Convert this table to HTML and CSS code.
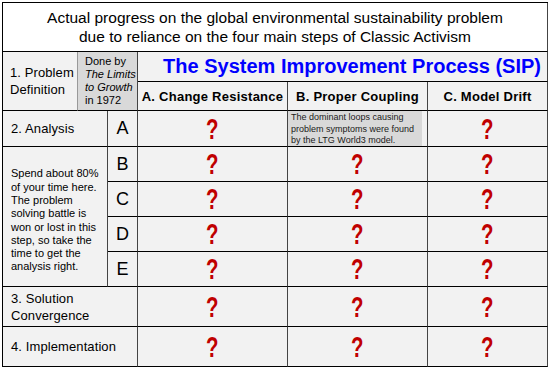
FILE: index.html
```html
<!DOCTYPE html>
<html>
<head>
<meta charset="utf-8">
<link rel="stylesheet" href="styles.css">
</head>
<body>
<div class="sheet">
  <div class="c title"><div>Actual progress on the global environmental sustainability problem<br>due to reliance on the four main steps of Classic Activism</div></div>

  <div class="c step step-def"><div>1. Problem<br>Definition</div></div>
  <div class="c done"><div>Done by<br><i>The Limits</i><br><i>to Growth</i><br>in 1972</div></div>
  <div class="c sip">The System Improvement Process (SIP)</div>
  <div class="c head">A. Change Resistance</div>
  <div class="c head">B. Proper Coupling</div>
  <div class="c head">C. Model Drift</div>

  <div class="c step span2">2. Analysis</div>
  <div class="c letter">A</div>
  <div class="c q"><span class="qm">?</span></div>
  <div class="c note"><div class="note-box">The dominant loops causing<br>problem symptoms were found<br>by the LTG World3 model.</div></div>
  <div class="c q"><span class="qm">?</span></div>

  <div class="c spend"><div>Spend about 80%<br>of your time here.<br>The problem<br>solving battle is<br>won or lost in this<br>step, so take the<br>time to get the<br>analysis right.</div></div>
  <div class="c letter">B</div>
  <div class="c q"><span class="qm">?</span></div>
  <div class="c q"><span class="qm">?</span></div>
  <div class="c q"><span class="qm">?</span></div>

  <div class="c letter">C</div>
  <div class="c q"><span class="qm">?</span></div>
  <div class="c q"><span class="qm">?</span></div>
  <div class="c q"><span class="qm">?</span></div>

  <div class="c letter">D</div>
  <div class="c q"><span class="qm">?</span></div>
  <div class="c q"><span class="qm">?</span></div>
  <div class="c q"><span class="qm">?</span></div>

  <div class="c letter">E</div>
  <div class="c q"><span class="qm">?</span></div>
  <div class="c q"><span class="qm">?</span></div>
  <div class="c q"><span class="qm">?</span></div>

  <div class="c step span3"><div>3. Solution<br>Convergence</div></div>
  <div class="c q"><span class="qm">?</span></div>
  <div class="c q"><span class="qm">?</span></div>
  <div class="c q"><span class="qm">?</span></div>

  <div class="c step span3">4. Implementation</div>
  <div class="c q"><span class="qm">?</span></div>
  <div class="c q"><span class="qm">?</span></div>
  <div class="c q"><span class="qm">?</span></div>
</div>
</body>
</html>
```

FILE: styles.css
```css
* { box-sizing: border-box; }
html, body { margin: 0; padding: 0; background: #fff; }
body { font-family: "Liberation Sans", Arial, sans-serif; color: #000; }

.sheet {
  margin: 2px 0 0 2px;
  width: 546px;
  display: grid;
  grid-template-columns: 75px 30px 30px 150px 140px 120px;
  grid-template-rows: 49px 30px 29px 36px 35px 35px 35px 35px 40px 40px;
  border-left: 1px solid #000;
  border-top: 1px solid #000;
  background: #f2f2f2;
}

.c {
  border-right: 1px solid #444;
  border-bottom: 1px solid #000;
  display: flex;
  align-items: center;
  min-width: 0;
}

.title {
  grid-column: 1 / -1;
  background: #fff;
  justify-content: center;
  text-align: center;
  font-size: 15.5px;
  line-height: 19px;
}

.step {
  font-size: 13px;
  line-height: 17px;
  padding-left: 8px;
  letter-spacing: 0.1px;
}
.step-def { grid-row: 2 / 4; border-right-color: #999; padding-left: 7px; }
.span2 { grid-column: 1 / 3; }
.span3 { grid-column: 1 / 4; }

.done {
  grid-column: 2 / 4;
  grid-row: 2 / 4;
  background: #d9d9d9;
  font-size: 11px;
  line-height: 12.8px;
  padding-left: 7px;
}
.done i { font-style: italic; }

.sip {
  grid-column: 4 / 7;
  justify-content: flex-end;
  padding-right: 6px;
  color: #0000ff;
  font-weight: bold;
  font-size: 20px;
}

.head {
  justify-content: center;
  font-weight: bold;
  font-size: 13px;
  letter-spacing: 0.25px;
}

.letter {
  justify-content: center;
  font-size: 18px;
}

.q { justify-content: center; }
.qm {
  display: inline-block;
  color: #c00000;
  font-weight: bold;
  font-size: 30px;
  line-height: 30px;
  transform: scaleX(0.68);
}

.note { align-items: stretch; }
.note-box {
  flex: 1;
  margin-right: 5px;
  background: #d9d9d9;
  font-size: 9px;
  line-height: 11.5px;
  padding: 1px 0 0 3px;
  color: #1a1a1a;
}

.spend {
  grid-column: 1 / 3;
  grid-row: 5 / 9;
  font-size: 11px;
  line-height: 13.3px;
  padding: 8px 0 0 8px;
}
```
